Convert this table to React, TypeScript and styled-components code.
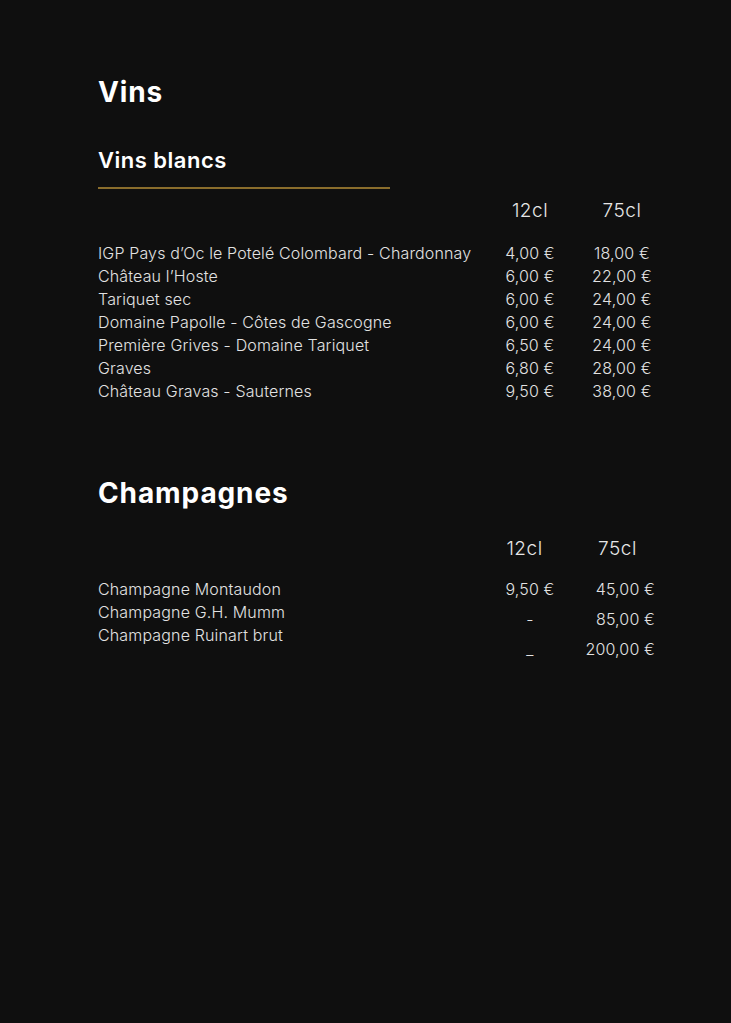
import React from "react";
import styled, { createGlobalStyle } from "styled-components";

const GlobalStyle = createGlobalStyle`
  html, body {
    margin: 0;
    padding: 0;
    background: #0f0f0f;
  }
  body {
    font-family: Inter, "Noto Sans", "Liberation Sans", sans-serif;
    color: #e2e2e2;
  }
`;

const Page = styled.main`
  min-height: 1023px;
  box-sizing: border-box;
  padding: 75px 0 0 98px;
  display: flex;
  flex-direction: column;
`;

const Title = styled.h1<{ $gap?: number }>`
  margin: ${(p) => p.$gap ?? 0}px 0 0;
  font-size: 28px;
  line-height: 34px;
  font-weight: 700;
  letter-spacing: 0.9px;
  color: #ffffff;
`;

const Subtitle = styled.h2`
  margin: 37px 0 0;
  font-size: 22px;
  line-height: 28px;
  font-weight: 600;
  letter-spacing: 0.5px;
  color: #ffffff;
`;

const Rule = styled.div`
  margin-top: 13px;
  width: 292px;
  height: 2px;
  background: #8a6d2c;
`;

const Table = styled.div<{ $top: number }>`
  margin-top: ${(p) => p.$top}px;
  display: grid;
  grid-template-columns: 380px 80px 80px;
  column-gap: 12px;
`;

const HeadCell = styled.div<{ $col: number; $shift?: number }>`
  grid-column: ${(p) => p.$col};
  font-size: 19px;
  line-height: 24px;
  font-weight: 300;
  letter-spacing: 0.5px;
  color: #e6e6e6;
  text-align: center;
  padding-right: ${(p) => p.$shift ?? 0}px;
`;

const Body = styled.div<{ $top: number }>`
  grid-column: 1 / -1;
  margin-top: ${(p) => p.$top}px;
  display: grid;
  grid-template-columns: subgrid;
`;

const Name = styled.div`
  grid-column: 1;
  font-size: 16px;
  line-height: 23px;
  font-weight: 300;
  letter-spacing: 0.15px;
  white-space: nowrap;
`;

const Price = styled.div<{ $col: number; $align?: string }>`
  grid-column: ${(p) => p.$col};
  font-size: 16px;
  line-height: 23px;
  font-weight: 300;
  letter-spacing: 0.15px;
  text-align: ${(p) => p.$align ?? "center"};
  white-space: nowrap;
`;

const ChampTable = styled.div`
  margin-top: 27px;
  display: grid;
  grid-template-columns: 382px 80px 75px;
  column-gap: 10px;
`;

const List = styled.div<{ $gap: number; $col: number }>`
  grid-column: ${(p) => p.$col};
  display: flex;
  flex-direction: column;
  row-gap: ${(p) => p.$gap}px;
`;

const whites = [
  ["IGP Pays d’Oc le Potelé Colombard - Chardonnay", "4,00 €", "18,00 €"],
  ["Château l’Hoste", "6,00 €", "22,00 €"],
  ["Tariquet sec", "6,00 €", "24,00 €"],
  ["Domaine Papolle - Côtes de Gascogne", "6,00 €", "24,00 €"],
  ["Première Grives - Domaine Tariquet", "6,50 €", "24,00 €"],
  ["Graves", "6,80 €", "28,00 €"],
  ["Château Gravas - Sauternes", "9,50 €", "38,00 €"],
];

const champagnes = [
  ["Champagne Montaudon", "9,50 €", "45,00 €"],
  ["Champagne G.H. Mumm", "-", "85,00 €"],
  ["Champagne Ruinart brut", "_", "200,00 €"],
];

export default function App() {
  return (
    <>
      <GlobalStyle />
      <Page>
        <Title>Vins</Title>
        <Subtitle>Vins blancs</Subtitle>
        <Rule />
        <Table $top={10}>
          <HeadCell $col={2}>12cl</HeadCell>
          <HeadCell $col={3}>75cl</HeadCell>
          <Body $top={19}>
            {whites.map(([n, a, b]) => (
              <React.Fragment key={n}>
                <Name>{n}</Name>
                <Price $col={2}>{a}</Price>
                <Price $col={3}>{b}</Price>
              </React.Fragment>
            ))}
          </Body>
        </Table>

        <Title $gap={73}>Champagnes</Title>
        <ChampTable>
          <HeadCell $col={2} $shift={11}>
            12cl
          </HeadCell>
          <HeadCell $col={3}>75cl</HeadCell>
          <Body $top={17}>
            <List $col={1} $gap={0}>
              {champagnes.map(([n]) => (
                <Name key={n}>{n}</Name>
              ))}
            </List>
            <List $col={2} $gap={7}>
              {champagnes.map(([n, a]) => (
                <Price key={n} $col={2}>
                  {a}
                </Price>
              ))}
            </List>
            <List $col={3} $gap={7}>
              {champagnes.map(([n, , b]) => (
                <Price key={n} $col={3} $align="right">
                  {b}
                </Price>
              ))}
            </List>
          </Body>
        </ChampTable>
      </Page>
    </>
  );
}
